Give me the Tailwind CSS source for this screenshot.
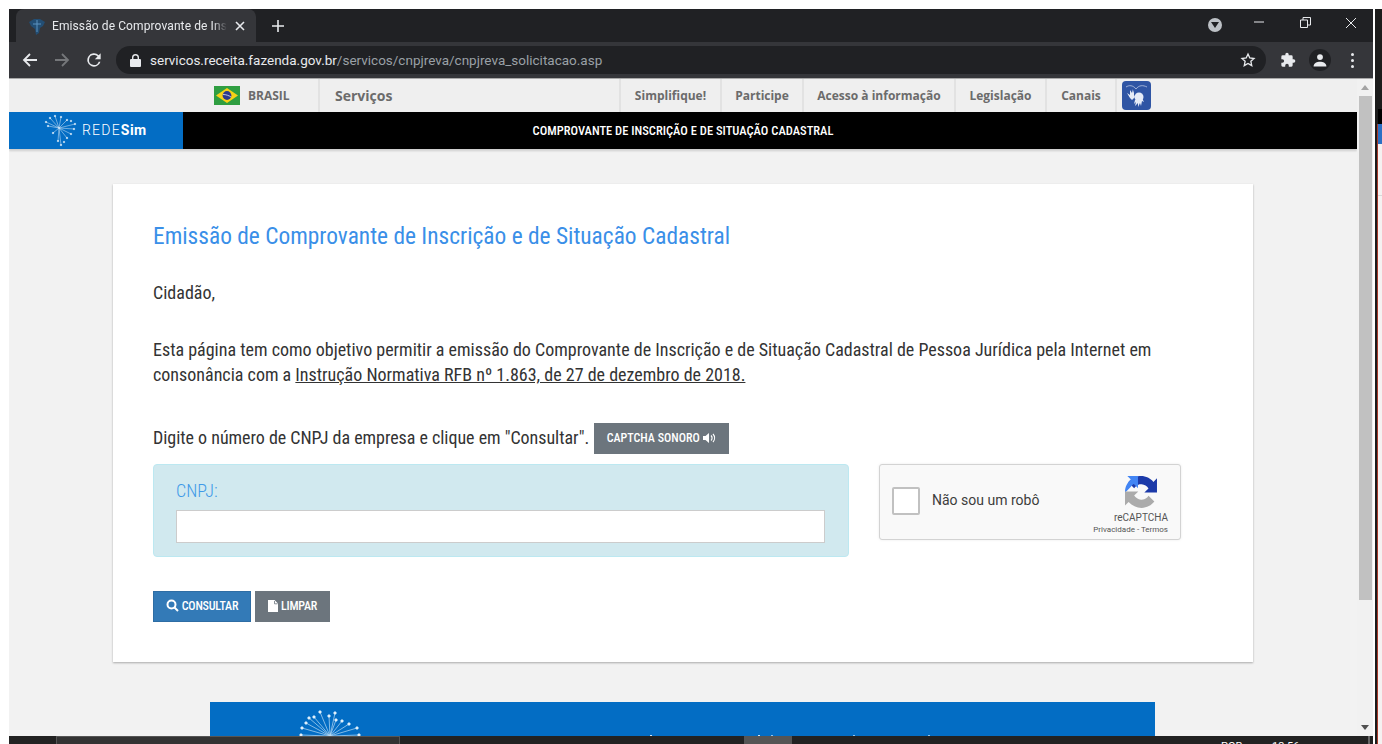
<!DOCTYPE html>
<html lang="pt-BR">
<head>
  <meta charset="UTF-8" />
  <title>Emissão de Comprovante de Inscrição e de Situação Cadastral</title>
  <script src="https://cdn.jsdelivr.net/npm/@tailwindcss/browser@4"></script>
</head>
<body class="relative w-[1382px] h-[744px] overflow-hidden bg-white font-['Roboto',sans-serif]">
  <!-- desktop strip behind the window, on the right -->
  <div class="absolute left-[1375px] top-[9px] w-[7px] h-[735px] bg-[#1c1c1c]">
    <div class="absolute left-[3px] top-[100px] w-[4px] h-[15px] bg-black"></div>
    <div class="absolute left-[3px] top-[115px] w-[4px] h-[20px] bg-[#2b6fc4]"></div>
    <div class="absolute left-[3px] top-[135px] w-[4px] bottom-0 bg-[#f5f1f1]"></div>
    <div class="absolute left-[3px] top-[186px] w-[4px] h-px bg-[#d8d8d8]"></div>
    <div class="absolute left-[2px] top-[115px] w-px bottom-0 bg-[#a83a2a]"></div>
  </div>

  <div class="ml-[9px] mt-[9px] w-[1364px] h-[735px] flex flex-col">
    <!-- tab strip -->
    <div class="h-[33px] bg-[#202124] flex items-end shrink-0 relative">
      <div class="ml-[7px] w-[240px] h-[33px] bg-[#35363a] rounded-t-[8px] flex items-center pl-[12px]">
        <svg class="w-[18px] h-[18px] shrink-0" viewBox="0 0 18 18">
          <path d="M1 5l5-3 6 0 5 3-2 4-3 2-1 5-3 2-1-6-4-3z" fill="#234e74" />
          <path d="M9 3v12M5 7h8" stroke="#5d93c0" stroke-width="1" />
        </svg>
        <span class="ml-[6px] w-[175px] overflow-hidden whitespace-nowrap text-[12px] tracking-[0.1px] text-[#e8eaed] [mask-image:linear-gradient(to_right,black_92%,transparent)]">Emissão de Comprovante de Inscrição</span>
        <svg class="ml-[7px] w-[12px] h-[12px]" viewBox="0 0 12 12"><path d="M2 2l8 8M10 2l-8 8" stroke="#e8eaed" stroke-width="1.6" /></svg>
      </div>
      <svg class="absolute left-[262px] top-[10px] w-[14px] h-[14px]" viewBox="0 0 14 14"><path d="M7 1v12M1 7h12" stroke="#e8eaed" stroke-width="1.6" /></svg>
      <div class="absolute left-[1199px] top-[9px] w-[14px] h-[14px] rounded-full bg-[#bdc1c6] flex items-center justify-center">
        <svg class="w-[8px] h-[6px]" viewBox="0 0 8 6"><path d="M0 0h8L4 6z" fill="#202124" /></svg>
      </div>
      <svg class="absolute left-[1244px] top-[7px] w-[12px] h-[12px]" viewBox="0 0 12 12"><path d="M1 6h10" stroke="#e8eaed" stroke-width="1" /></svg>
      <svg class="absolute left-[1291px] top-[8px] w-[11px] h-[11px]" viewBox="0 0 11 11" fill="none" stroke="#e8eaed"><path d="M.5 3h7v7.500h-7zM3 3V.5h7.500V8H8" /></svg>
      <svg class="absolute left-[1336px] top-[8px] w-[12px] h-[12px]" viewBox="0 0 12 12"><path d="M1 1l10 10M11 1L1 11" stroke="#e8eaed" stroke-width="1" /></svg>
    </div>

    <!-- toolbar -->
    <div class="h-[36px] bg-[#35363a] flex items-center shrink-0 relative">
      <svg class="ml-[13px] w-[16px] h-[16px]" viewBox="0 0 16 16" fill="none" stroke="#e8eaed" stroke-width="1.800"><path d="M15 8H2M8 2L2 8l6 6" /></svg>
      <svg class="ml-[16px] w-[16px] h-[16px]" viewBox="0 0 16 16" fill="none" stroke="#75777a" stroke-width="1.800"><path d="M1 8h13M8 2l6 6-6 6" /></svg>
      <svg class="ml-[14px] w-[20px] h-[20px]" viewBox="0 0 24 24" fill="#e8eaed"><path d="M17.650 6.350A8 8 0 1 0 19.730 14h-2.080A6 6 0 1 1 12 6c1.660 0 3.140.69 4.220 1.780L13 11h7V4z" /></svg>
      <div class="ml-[12px] w-[1150px] h-[28px] rounded-full bg-[#202124] flex items-center pl-[14px] relative">
        <svg class="w-[11px] h-[13px]" viewBox="0 0 11 13" fill="#e8eaed"><path d="M1 5h1V3.500a3.500 3.500 0 0 1 7 0V5h1a1 1 0 0 1 1 1v6a1 1 0 0 1-1 1H1a1 1 0 0 1-1-1V6a1 1 0 0 1 1-1zM3.400 5h4.200V3.500a2.100 2.100 0 0 0-4.200 0z" /></svg>
        <span class="ml-[9px] text-[13.5px] text-[#e8eaed] whitespace-nowrap">servicos.receita.fazenda.gov.br<span class="text-[#9aa0a6]">/servicos/cnpjreva/cnpjreva_solicitacao.asp</span></span>
        <svg class="absolute right-[10px] top-[6px] w-[16px] h-[16px]" viewBox="0 0 24 24" fill="none" stroke="#e8eaed" stroke-width="2"><path d="M12 3l2.700 6 6.300.7-4.700 4.300 1.300 6.500L12 17.200 6.400 20.500 7.700 14 3 9.700 9.300 9z" /></svg>
      </div>
      <svg class="ml-[14px] w-[16px] h-[16px]" viewBox="0 0 24 24" fill="#e8eaed"><path d="M20.500 11H19V7a2 2 0 0 0-2-2h-4V3.500a2.500 2.500 0 0 0-5 0V5H4a2 2 0 0 0-2 2v3.800h1.500a2.700 2.700 0 0 1 0 5.400H2V20a2 2 0 0 0 2 2h3.800v-1.500a2.700 2.700 0 0 1 5.400 0V22H17a2 2 0 0 0 2-2v-4h1.500a2.500 2.500 0 0 0 0-5z" /></svg>
      <div class="ml-[13px] w-[22px] h-[22px] rounded-full bg-[#202124] flex items-center justify-center">
        <svg class="w-[14px] h-[14px]" viewBox="0 0 24 24" fill="#e8eaed"><circle cx="12" cy="7" r="5" /><path d="M1 23c0-6 6-8 11-8s11 2 11 8z" /></svg>
      </div>
      <div class="ml-[20px] flex flex-col gap-[3px]">
        <div class="w-[3px] h-[3px] rounded-full bg-[#e8eaed]"></div>
        <div class="w-[3px] h-[3px] rounded-full bg-[#e8eaed]"></div>
        <div class="w-[3px] h-[3px] rounded-full bg-[#e8eaed]"></div>
      </div>
    </div>
    <div class="h-px bg-[#a8a8a8] shrink-0"></div>

    <!-- viewport -->
    <div class="h-[657px] flex shrink-0 overflow-hidden">
      <div class="w-[1348px] bg-[#f2f2f2] flex flex-col">
        <!-- gov bar -->
        <div class="h-[33px] bg-[#efefef] flex items-stretch font-['Open_Sans',sans-serif] text-[#6b6b6b] font-bold text-[12px] shrink-0">
          <div class="w-[231px] flex items-center justify-end">
            <svg class="w-[26px] h-[19px]" viewBox="0 0 26 19"><rect width="26" height="19" fill="#2f9e41" /><path d="M13 2l11 7.500L13 17 2 9.500z" fill="#f7d116" /><circle cx="13" cy="9.500" r="4.400" fill="#2b3a8c" /><path d="M9 8.500c3 0 6 1 8 2.500" stroke="#fff" stroke-width=".7" fill="none" /></svg>
          </div>
          <div class="w-[80px] flex items-center pl-[8px] border-r-2 border-[#e2e2e2]">BRASIL</div>
          <div class="w-[301px] flex items-center pl-[15px] text-[14px] border-r-2 border-[#e2e2e2]">Serviços</div>
          <div class="w-[101px] flex items-center justify-center border-r-2 border-[#e2e2e2]">Simplifique!</div>
          <div class="w-[82px] flex items-center justify-center border-r-2 border-[#e2e2e2]">Participe</div>
          <div class="w-[152px] flex items-center justify-center border-r-2 border-[#e2e2e2]">Acesso à informação</div>
          <div class="w-[91px] flex items-center justify-center border-r-2 border-[#e2e2e2]">Legislação</div>
          <div class="w-[70px] flex items-center justify-center border-r-2 border-[#e2e2e2]">Canais</div>
          <div class="ml-[5px] mt-[2px] w-[29px] h-[29px] rounded-[4px] bg-[#2f55a4] flex items-center justify-center">
            <svg class="w-[27px] h-[27px]" viewBox="0 0 27 27" fill="#e6ecf7">
              <path d="M3 5c3-2 7-2 10 2 3-4 7-4 11-2" fill="none" stroke="#cfd8ee" stroke-width=".7" />
              <path d="M7 8l2 3 0-4 1 4 1-3 0 5 1 2-3 3-2-2-3-5 3 2z" />
              <circle cx="16" cy="15" r="4.500" />
              <path d="M12 18l-1 4 2-2-1 4 3-3 0 4 2-4 1 3 1-5 2 1-2-4z" />
            </svg>
          </div>
        </div>

        <!-- black header -->
        <div class="h-[37px] bg-black flex shrink-0 shadow-[0_2px_2px_rgba(0,0,0,0.15)]">
          <div class="w-[174px] bg-[#036dc4] flex items-center pl-[35px]">
            <svg class="w-[33px] h-[33px]" viewBox="0 0 33 33" stroke="#dcecfa" stroke-width=".5" fill="#fff">
              <path d="M15 14L2 8M15 14L6 4M15 14L11 2M15 14L17 3M15 14L23 6M15 14L31 10M15 14L30 15M15 14L27 20M15 14L23 24M15 14L17 31M15 14L14 27M15 14L9 19M15 14L4 12" />
              <circle cx="2" cy="8" r=".8" /><circle cx="6" cy="4" r=".8" /><circle cx="11" cy="2" r=".8" /><circle cx="17" cy="3" r=".8" /><circle cx="23" cy="6" r=".8" /><circle cx="27" cy="7" r=".8" /><circle cx="31" cy="10" r=".8" /><circle cx="30" cy="15" r=".8" /><circle cx="27" cy="20" r=".8" /><circle cx="23" cy="24" r=".8" /><circle cx="20" cy="28" r=".8" /><circle cx="17" cy="31" r=".8" /><circle cx="14" cy="27" r=".8" /><circle cx="9" cy="19" r=".8" /><circle cx="4" cy="12" r=".8" />
            </svg>
            <span class="ml-[5px] text-[14px] text-white font-light tracking-[1.2px] whitespace-nowrap">REDE<span class="font-bold tracking-[0.5px]">Sim</span></span>
          </div>
          <div class="w-[1174px] flex items-center justify-center pr-[174px] pt-[1px] text-white text-[12.5px] font-medium [font-stretch:75%] whitespace-nowrap">COMPROVANTE DE INSCRIÇÃO E DE SITUAÇÃO CADASTRAL</div>
        </div>

        <!-- card -->
        <div class="mt-[35px] ml-[104px] w-[1140px] h-[478px] bg-white shadow-[0_1px_2px_rgba(0,0,0,0.3)] pl-[40px] pt-[38px] shrink-0 text-[18px] [font-stretch:75%] text-[#333]">
          <h1 class="text-[23.4px] leading-[28px] text-[#3a8fe8]">Emissão de Comprovante de Inscrição e de Situação Cadastral</h1>
          <p class="mt-[30px] leading-[25px]">Cidadão,</p>
          <p class="mt-[32px] w-[1020px] leading-[25px]">Esta página tem como objetivo permitir a emissão do Comprovante de Inscrição e de Situação Cadastral de Pessoa Jurídica pela Internet em consonância com a <span class="underline">Instrução Normativa RFB nº 1.863, de 27 de dezembro de 2018.</span></p>
          <div class="mt-[36px] flex items-center h-[31px]">
            <span class="mb-[3px] tracking-[-0.03px]">Digite o número de CNPJ da empresa e clique em "Consultar".</span>
            <button class="ml-[5px] pb-[1px] h-[31px] w-[135px] bg-[#6c757d] text-white text-[12px] font-medium flex items-center justify-center">CAPTCHA SONORO
              <svg class="ml-[3px] w-[14px] h-[12px]" viewBox="0 0 14 12" fill="#fff"><path d="M0 4h2.500L6 1v10L2.500 8H0z" /><path d="M8 3.500a3.500 3.500 0 0 1 0 5M10 2a6 6 0 0 1 0 8" fill="none" stroke="#fff" stroke-width="1.200" /></svg>
            </button>
          </div>
          <div class="mt-[10px] flex items-start">
            <div class="w-[696px] h-[93px] bg-[#d1e9ef] border border-[#bce8f1] rounded-[4px] pl-[22px] pt-[15px]">
              <div class="text-[18px] leading-[22px] font-light text-[#3f9ae8]">CNPJ:</div>
              <input class="mt-[8px] block w-[649px] h-[33px] bg-white border border-[#ccc]" />
            </div>
            <div class="ml-[30px] w-[302px] h-[76px] bg-[#f9f9f9] border border-[#d3d3d3] rounded-[3px] shadow-[0_0_3px_rgba(0,0,0,0.08)] flex items-center pl-[12px] pb-[3px] relative [font-stretch:100%]">
              <div class="w-[28px] h-[28px] bg-white border-2 border-[#c1c1c1] rounded-[2px]"></div>
              <span class="ml-[12px] text-[14px] text-[#3d3d3d]">Não sou um robô</span>
              <div class="absolute right-[12px] top-[11px] flex flex-col items-end">
                <svg class="mr-[11px] w-[32px] h-[32px]" viewBox="0 0 64 64">
                  <path d="M64 31.955l-.033-1.37V4.687l-7.16 7.16C50.948 4.674 42.033.093 32.05.093c-10.4 0-19.622 4.96-25.458 12.64l11.736 11.86a15.55 15.55 0 0 1 4.754-5.334c2.05-1.6 4.952-2.906 8.968-2.906.485 0 .86.057 1.135.163 5.808.458 10.842 3.664 13.806 8.316l-8.307 8.307c10.522-.04 22.4-.066 29.916.004" fill="#1c3aa9" />
                  <path d="M31.91.002l-1.37.033H4.64l7.16 7.16C4.628 13.05.047 21.965.047 31.947c0 .485.013.968.035 1.447l11.72-11.72c.58-1.07 1.4-2.2 2.5-3.2.9-1 2-1.8 3.4-2.4l8.307 8.307c-.04-10.522-.066-22.4.004-29.916" fill="#4285f4" />
                  <path d="M.002 31.947l.033 1.37v25.898l7.16-7.16c7.147 7.173 16.062 11.754 26.044 11.754 10.4 0 19.622-4.96 25.458-12.64L46.96 39.31a15.55 15.55 0 0 1-4.754 5.334c-2.05 1.6-4.952 2.906-8.968 2.906-.485 0-.86-.057-1.135-.163-5.808-.458-10.842-3.664-13.806-8.316l8.307-8.307c-10.522.04-22.4.066-29.916-.004" fill="#ababab" />
                </svg>
                <div class="mt-[3px] text-[10px] leading-[13px] text-[#555]">reCAPTCHA</div>
                <div class="text-[8px] leading-[11px] text-[#555] whitespace-nowrap">Privacidade - Termos</div>
              </div>
            </div>
          </div>
          <div class="mt-[34px] flex gap-[4px] text-[12px] font-medium text-white tracking-[-0.2px]">
            <button class="pb-[2px] w-[98px] h-[31px] bg-[#337ab7] border border-[#2e6da4] flex items-center justify-center gap-[3px]">
              <svg class="w-[13px] h-[13px]" viewBox="0 0 13 13" fill="none" stroke="#fff" stroke-width="2"><circle cx="5.500" cy="5.500" r="4" /><path d="M8.500 8.500l3.500 3.500" /></svg>CONSULTAR
            </button>
            <button class="pb-[2px] w-[75px] h-[31px] bg-[#6c757d] flex items-center justify-center gap-[3px]">
              <svg class="w-[10px] h-[12px]" viewBox="0 0 10 12" fill="#fff"><path d="M0 0h6.500L10 3.500V12H0z" /><path d="M6.500 1v2.800H9.500" fill="none" stroke="#6c757d" stroke-width=".8" /></svg>LIMPAR
            </button>
          </div>
        </div>

        <!-- footer -->
        <div class="mt-[40px] ml-[201px] w-[945px] h-[40px] bg-[#036dc4] shrink-0 pl-[89px] pt-[8px] relative">
          <svg class="w-[62px] h-[32px]" viewBox="0 0 62 32" stroke="#bcdcf5" stroke-width=".7" fill="#fff">
            <path d="M31 26L2 25M31 26L3 18M31 26L7 13M31 26L10 8M31 26L15 7M31 26L21 2M31 26L30 6M31 26L36 3M31 26L37 10M31 26L43 11M31 26L50 14M31 26L58 18M31 26L60 25" />
            <circle cx="2" cy="25" r="1.300" /><circle cx="3" cy="18" r="1.300" /><circle cx="7" cy="13" r="1.300" /><circle cx="10" cy="8" r="1.300" /><circle cx="15" cy="7" r="1.300" /><circle cx="21" cy="2" r="1.300" /><circle cx="30" cy="6" r="1.300" /><circle cx="36" cy="3" r="1.300" /><circle cx="37" cy="10" r="1.300" /><circle cx="43" cy="11" r="1.300" /><circle cx="50" cy="14" r="1.300" /><circle cx="58" cy="18" r="1.300" /><circle cx="60" cy="25" r="1.300" />
          </svg>
          <!-- tops of the text cut off by the taskbar -->
          <div class="absolute left-[440px] top-[33px] w-[2px] h-px bg-[#cfe6fa]"></div>
          <div class="absolute left-[548px] top-[33px] w-[2px] h-px bg-[#cfe6fa]"></div>
          <div class="absolute left-[561px] top-[33px] w-[2px] h-px bg-[#8fc4ef]"></div>
          <div class="absolute left-[643px] top-[33px] w-[2px] h-px bg-[#8fc4ef]"></div>
          <div class="absolute left-[718px] top-[33px] w-[2px] h-px bg-[#8fc4ef]"></div>
        </div>
      </div>

      <!-- scrollbar -->
      <div class="w-[16px] bg-[#f1f1f1] flex flex-col items-center shrink-0 relative">
        <svg class="mt-[6px] w-[8px] h-[5px]" viewBox="0 0 8 5"><path d="M0 5h8L4 0z" fill="#a3a3a3" /></svg>
        <div class="mt-[6px] ml-[1px] w-[13px] h-[504px] bg-[#c1c1c1]"></div>
        <svg class="absolute bottom-[6px] w-[8px] h-[5px]" viewBox="0 0 8 5"><path d="M0 0h8L4 5z" fill="#505050" /></svg>
      </div>
    </div>

    <!-- taskbar -->
    <div class="h-[8px] bg-[#222] relative overflow-hidden shrink-0">
      <div class="absolute left-[47px] top-0 w-[344px] h-[8px] bg-[#333] border border-b-0 border-[#555]"></div>
      <div class="absolute left-[735px] top-0 w-[48px] h-[8px] bg-[#555]"></div>
      <span class="absolute left-[1212px] top-[5px] text-[11px] leading-[12px] text-white">POR</span>
      <span class="absolute left-[1263px] top-[5px] text-[11px] leading-[12px] text-white">13:56</span>
      <div class="absolute left-[1359px] top-0 w-[2px] h-[8px] bg-[#666]"></div>
    </div>
  </div>
</body>
</html>
